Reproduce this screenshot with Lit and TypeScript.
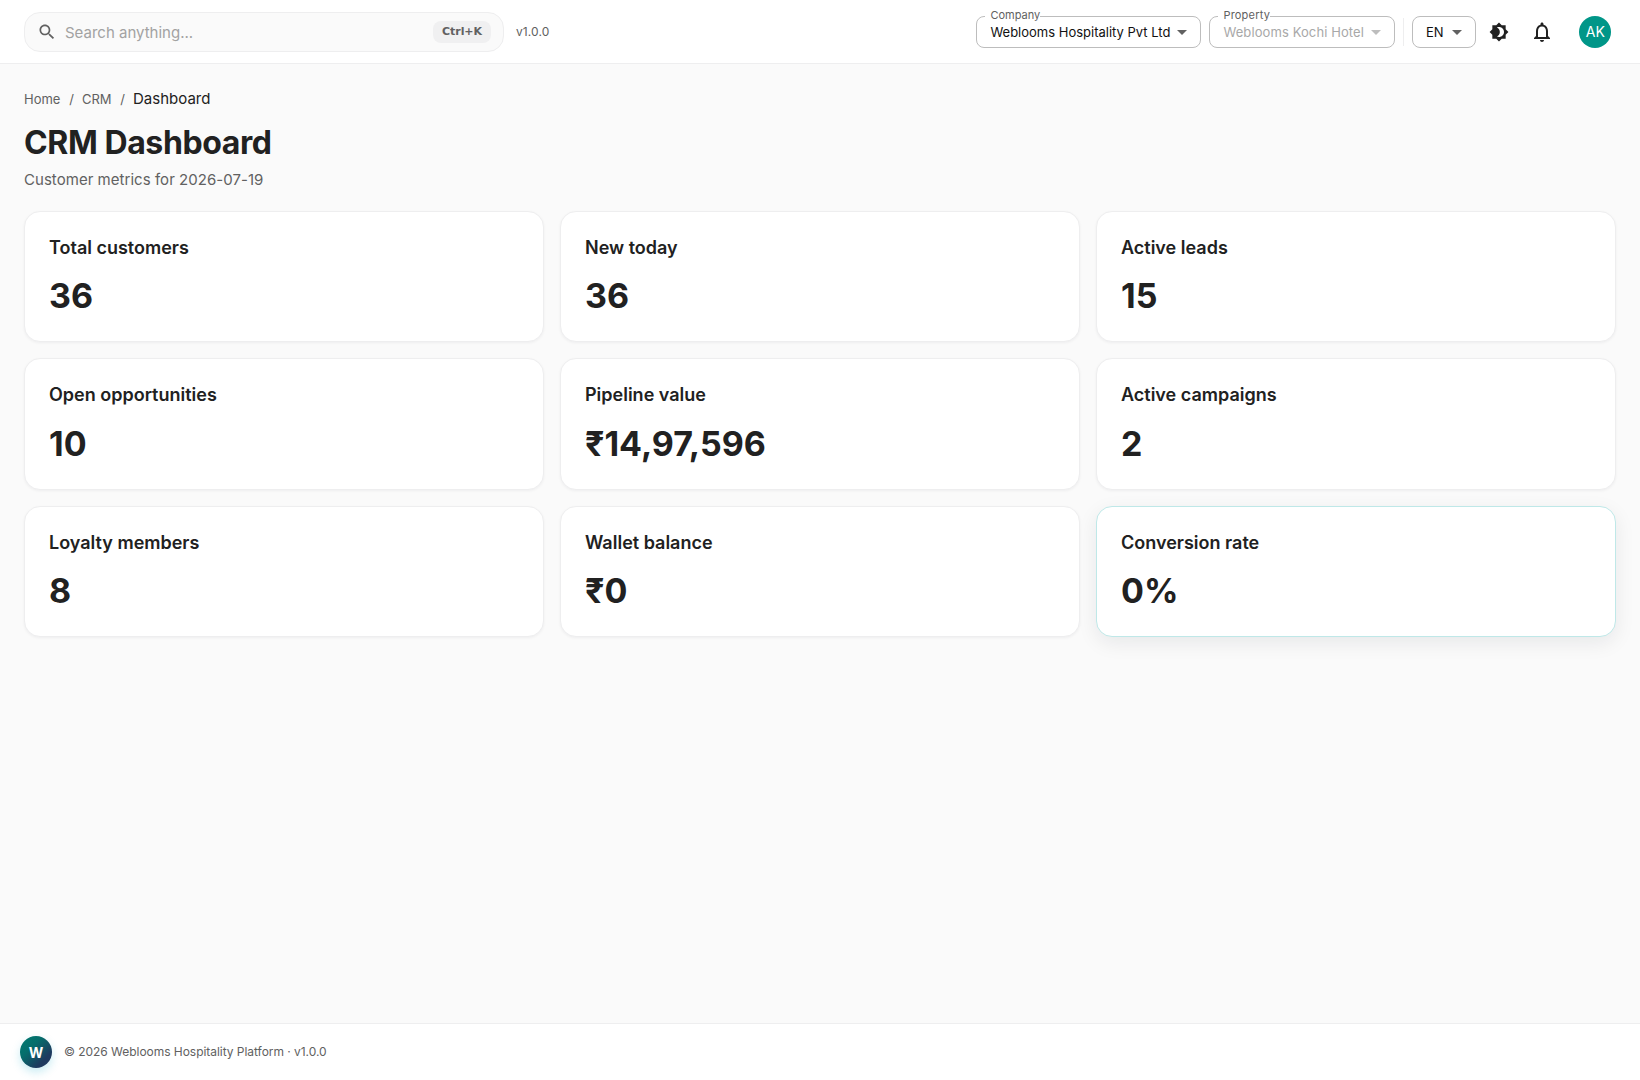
import { LitElement, html, css } from "lit";
import { customElement, property } from "lit/decorators.js";
import { classMap } from "lit/directives/class-map.js";

interface Metric {
  title: string;
  value: string;
  active?: boolean;
}

const METRICS: Metric[] = [
  { title: "Total customers", value: "36" },
  { title: "New today", value: "36" },
  { title: "Active leads", value: "15" },
  { title: "Open opportunities", value: "10" },
  { title: "Pipeline value", value: "₹14,97,596" },
  { title: "Active campaigns", value: "2" },
  { title: "Loyalty members", value: "8" },
  { title: "Wallet balance", value: "₹0" },
  { title: "Conversion rate", value: "0%", active: true },
];

@customElement("metric-card")
class MetricCard extends LitElement {
  @property() name = "";
  @property() value = "";
  @property({ type: Boolean }) active = false;

  static styles = css`
    :host { display: block; }
    .card {
      box-sizing: border-box;
      height: 131.4px;
      padding: 24px;
      background: #fff;
      border: 1px solid #eeeeef;
      border-radius: 16px;
      box-shadow: 0 1px 3px rgba(15, 23, 42, 0.05);
    }
    .card.active {
      border-color: #bfe8e8;
      box-shadow: 0 6px 20px rgba(15, 23, 42, 0.08);
    }
    .name { font-size: 18px; line-height: 23.4px; font-weight: 600; }
    .value { margin-top: 16px; font-size: 34px; line-height: 42px; font-weight: 700; }
  `;

  render() {
    return html`<div class=${classMap({ card: true, active: this.active })}>
      <div class="name">${this.name}</div>
      <div class="value">${this.value}</div>
    </div>`;
  }
}

@customElement("outlined-select")
class OutlinedSelect extends LitElement {
  @property() label = "";
  @property() value = "";
  @property({ type: Boolean }) disabled = false;

  static styles = css`
    :host { display: block; }
    .box {
      position: relative;
      box-sizing: border-box;
      height: 32px;
      display: flex;
      align-items: center;
      padding: 0 6px 0 13px;
      border: 1px solid #bdbdbd;
      border-radius: 8px;
      font-size: 13px;
      line-height: 20px;
      color: #111;
    }
    .label {
      position: absolute;
      left: 8px;
      top: -10px;
      padding-left: 5px;
      background: #fff;
      font-size: 11px;
      line-height: 16px;
      color: #616161;
    }
    .value { min-width: 19px; }
    .arrow { width: 24px; height: 24px; fill: #616161; }
    .disabled .value { color: #a8a8a8; letter-spacing: 0.1px; }
    .disabled .label { letter-spacing: 0.2px; }
    .disabled .arrow { fill: #bdbdbd; }
  `;

  render() {
    return html`<div class=${classMap({ box: true, disabled: this.disabled })}>
      ${this.label ? html`<span class="label">${this.label}</span>` : null}
      <span class="value">${this.value}</span>
      <svg class="arrow" viewBox="0 0 24 24"><path d="M7 10l5 5 5-5z" /></svg>
    </div>`;
  }
}

@customElement("app-root")
class AppRoot extends LitElement {
  static styles = css`
    :host {
      display: flex;
      flex-direction: column;
      height: 1080px;
      background: #fafafa;
      color: #212121;
      font-family: Inter, "Liberation Sans", sans-serif;
    }
    .top {
      box-sizing: border-box;
      height: 64px;
      display: flex;
      align-items: center;
      padding: 0 24px;
      background: #fff;
      border-bottom: 1px solid #eeeeef;
    }
    .search {
      box-sizing: border-box;
      width: 480px;
      height: 40px;
      display: flex;
      align-items: center;
      padding: 0 12px;
      border: 1px solid #eeeeef;
      border-radius: 16px;
      background: #fafafa;
    }
    .glass { width: 20px; height: 20px; fill: #616161; }
    .hint { flex: 1; margin-left: 8px; padding-top: 2px; font-size: 15px; line-height: 20px; color: #a2a2a2; }
    .keys {
      height: 22px;
      padding: 0 9px;
      border-radius: 8px;
      background: #f0f0f1;
      font: 700 11px/21px "DejaVu Sans", sans-serif;
      letter-spacing: -0.05px;
      color: #616161;
    }
    .version { flex: 1; margin-left: 12px; font-size: 12px; letter-spacing: 0.1px; color: #616161; }
    .selects { display: flex; gap: 8px; }
    .divider { width: 1px; height: 28px; margin: 0 8px; background: #eeeeef; }
    .icon { fill: #212121; }
    .theme { width: 20px; height: 20px; margin-left: 13px; }
    .bell { width: 24px; height: 24px; margin-left: 21px; }
    .avatar {
      width: 32px;
      height: 32px;
      margin: 0 5px 0 25px;
      border-radius: 50%;
      background: #009688;
      color: #fff;
      font-size: 14px;
      line-height: 32px;
      letter-spacing: 0.2px;
      text-indent: 1px;
      text-align: center;
    }
    .page { flex: 1; padding: 24px; }
    .crumbs { display: flex; align-items: baseline; gap: 8px; height: 21px; font-size: 13px; line-height: 21px; color: #616161; }
    .crumbs .step { margin-right: 0.8px; }
    .crumbs .here { font-size: 15px; color: #212121; }
    .heading { margin: 14px 0 0; font-size: 32px; line-height: 40px; font-weight: 700; letter-spacing: -0.4px; }
    .sub { margin-top: 4.5px; font-size: 15px; line-height: 24px; letter-spacing: 0.04px; color: #616161; }
    .grid { display: grid; grid-template-columns: repeat(3, 1fr); gap: 16px; margin-top: 19.5px; }
    .footer {
      box-sizing: border-box;
      height: 57px;
      display: flex;
      align-items: center;
      gap: 12px;
      padding: 0 20px;
      background: #fff;
      border-top: 1px solid #eeeeef;
      font-size: 12px;
      color: #616161;
    }
    .legal { line-height: 16px; letter-spacing: -0.04px; }
    .logo {
      width: 32px;
      height: 32px;
      border-radius: 50%;
      background: linear-gradient(135deg, #00796b 0%, #1e3a5f 72%);
      background: linear-gradient(135deg, #007a70 0%, #056e6c 35%, #1e3a5f 75%);
      box-shadow: 0 4px 10px rgba(0, 170, 200, 0.22);
      color: #fff;
      font-size: 14px;
      font-weight: 700;
      line-height: 33px;
      text-align: center;
    }
  `;

  render() {
    return html`
      <header class="top">
        <div class="search">
          <svg class="glass" viewBox="0 0 24 24"><path d="M15.5 14h-.79l-.28-.27C15.41 12.59 16 11.11 16 9.5 16 5.91 13.09 3 9.5 3S3 5.91 3 9.5 5.91 16 9.5 16c1.61 0 3.09-.59 4.23-1.57l.27.28v.79l5 4.99L20.49 19l-4.99-5zm-6 0C7.01 14 5 11.99 5 9.5S7.01 5 9.5 5 14 7.01 14 9.5 11.99 14 9.5 14z" /></svg>
          <span class="hint">Search anything...</span>
          <span class="keys">Ctrl+K</span>
        </div>
        <span class="version">v1.0.0</span>
        <div class="selects">
          <outlined-select label="Company" value="Weblooms Hospitality Pvt Ltd"></outlined-select>
          <outlined-select label="Property" value="Weblooms Kochi Hotel" disabled></outlined-select>
        </div>
        <span class="divider"></span>
        <outlined-select value="EN"></outlined-select>
        <svg class="icon theme" viewBox="0 0 24 24"><path d="M20 8.69V4h-4.69L12 .69 8.69 4H4v4.69L.69 12 4 15.31V20h4.69L12 23.31 15.31 20H20v-4.69L23.31 12 20 8.69zM12 18c-.89 0-1.74-.2-2.5-.55C11.56 16.5 13 14.42 13 12s-1.44-4.5-3.5-5.45C10.26 6.2 11.11 6 12 6c3.31 0 6 2.69 6 6s-2.69 6-6 6z" /></svg>
        <svg class="icon bell" viewBox="0 0 24 24"><path d="M12 22c1.1 0 2-.9 2-2h-4c0 1.1.9 2 2 2zm6-6v-5c0-3.07-1.63-5.64-4.5-6.32V4c0-.83-.67-1.5-1.5-1.5s-1.5.67-1.5 1.5v.68C7.64 5.36 6 7.92 6 11v5l-2 2v1h16v-1l-2-2zm-2 1H8v-6c0-2.48 1.51-4.5 4-4.5s4 2.02 4 4.5v6z" /></svg>
        <div class="avatar">AK</div>
      </header>
      <main class="page">
        <nav class="crumbs"><span class="step">Home</span><span>/</span><span class="step">CRM</span><span>/</span><span class="here">Dashboard</span></nav>
        <h1 class="heading">CRM Dashboard</h1>
        <div class="sub">Customer metrics for 2026-07-19</div>
        <section class="grid">
          ${METRICS.map((m) => html`<metric-card .name=${m.title} .value=${m.value} ?active=${m.active}></metric-card>`)}
        </section>
      </main>
      <footer class="footer"><div class="logo">W</div><span class="legal">© 2026 Weblooms Hospitality Platform · v1.0.0</span></footer>
    `;
  }
}
